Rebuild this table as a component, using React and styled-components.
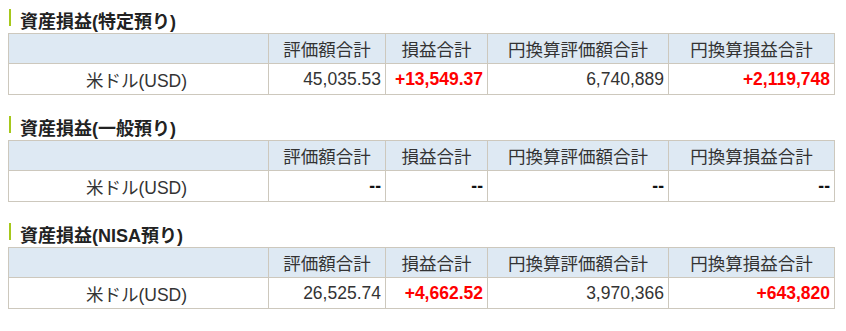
import styled, { createGlobalStyle } from "styled-components";

const GlobalStyle = createGlobalStyle`
  body {
    margin: 8px;
    background: #fff;
    color: #333;
    font-family: "Liberation Sans", "Noto Sans CJK JP", sans-serif;
  }
`;

const Section = styled.section`
  margin-bottom: 20px;
`;

const Title = styled.h2`
  display: flex;
  align-items: flex-start;
  gap: 9px;
  box-sizing: border-box;
  height: 25px;
  margin: 0;
  padding: 2px 0 0 1px;
  font-size: 18px;
  font-weight: bold;
  line-height: 24px;
  color: #222;
`;

const Bar = styled.span`
  width: 2px;
  height: 17px;
  margin-top: -1px;
  background: #a6c81c;
`;

const Table = styled.table`
  width: 826px;
  table-layout: fixed;
  border-collapse: collapse;
  font-size: 17.5px;
`;

const Col = styled.col`
  width: ${(p) => p.$w}px;
`;

const Th = styled.th`
  height: 29px;
  padding: 0;
  background: #dee9f3;
  border: 1px solid #cdc8bd;
  font-weight: normal;
  text-align: center;
  color: #333;
`;

const Td = styled.td`
  height: 30px;
  padding: 0 4px 0 0;
  border: 1px solid #cdc8bd;
  text-align: ${(p) => (p.$center ? "center" : "right")};
  font-weight: ${(p) => (p.$bold ? "bold" : "normal")};
  color: ${(p) => (p.$red ? "#ff0000" : p.$bold ? "#111" : "#333")};
`;

const headers = ["評価額合計", "損益合計", "円換算評価額合計", "円換算損益合計"];
const widths = [260, 117, 102, 181, 166];

const sections = [
  { title: "資産損益(特定預り)", values: ["45,035.53", "+13,549.37", "6,740,889", "+2,119,748"] },
  { title: "資産損益(一般預り)", values: ["--", "--", "--", "--"] },
  { title: "資産損益(NISA預り)", values: ["26,525.74", "+4,662.52", "3,970,366", "+643,820"] },
];

const ValueCell = ({ value, gain }) => {
  if (value === "--") return <Td $bold>--</Td>;
  return (
    <Td $bold={gain} $red={gain}>
      {value}
    </Td>
  );
};

const App = () => (
  <>
    <GlobalStyle />
    {sections.map((s) => (
      <Section key={s.title}>
        <Title>
          <Bar />
          {s.title}
        </Title>
        <Table>
          <colgroup>
            {widths.map((w, i) => (
              <Col key={i} $w={w} />
            ))}
          </colgroup>
          <thead>
            <tr>
              <Th />
              {headers.map((h) => (
                <Th key={h}>{h}</Th>
              ))}
            </tr>
          </thead>
          <tbody>
            <tr>
              <Td $center>米ドル(USD)</Td>
              {s.values.map((v, i) => (
                <ValueCell key={i} value={v} gain={i % 2 === 1} />
              ))}
            </tr>
          </tbody>
        </Table>
      </Section>
    ))}
  </>
);

export default App;
